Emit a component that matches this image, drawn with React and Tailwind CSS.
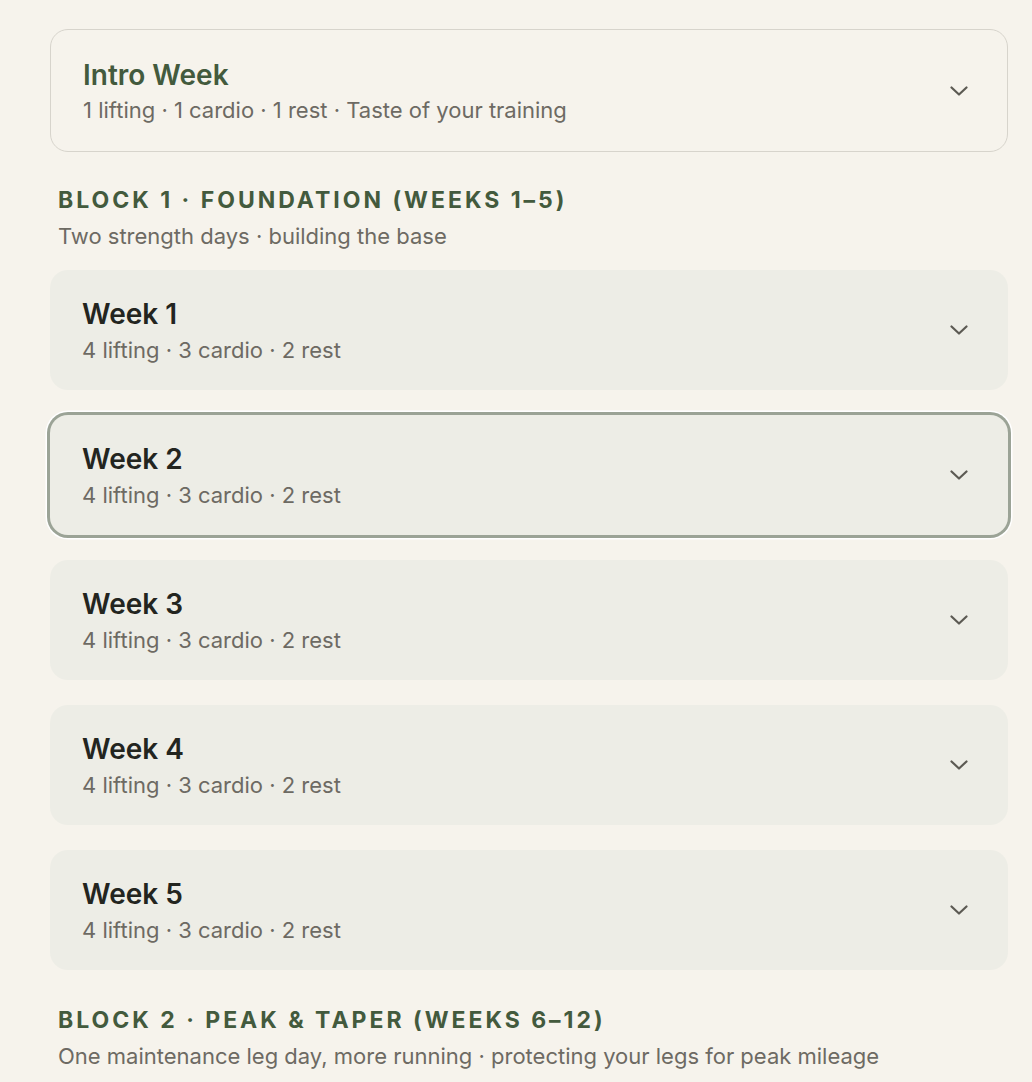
import React from "react";

const weeks = [1, 2, 3, 4, 5];

function Chevron() {
  return (
    <svg width="18" height="10" viewBox="0 0 18 10" fill="none" stroke="#5c5a53" strokeWidth="2.2" strokeLinecap="round" strokeLinejoin="round">
      <path d="M1.5 1.5 9 8.5 16.5 1.5" />
    </svg>
  );
}

function WeekCard({ n, active }) {
  return (
    <button
      className={`w-full flex items-center justify-between text-left bg-[#edede6] rounded-[18px] h-[120px] pl-[32px] pr-[40px] ${
        active ? "shadow-[0_0_0_3px_#9ba396,0_0_0_4.5px_#ffffff]" : ""
      }`}
    >
      <div>
        <div className="text-[28px] leading-[34px] font-semibold text-[#23251f]">Week {n}</div>
        <div className="text-[22px] leading-[28px] text-[#6d6a63] mt-[5px]">4 lifting · 3 cardio · 2 rest</div>
      </div>
      <Chevron />
    </button>
  );
}

export default function App() {
  return (
    <div className="min-h-screen bg-[#f6f3ec] pl-[50px] pr-[24px] pt-[29px]" style={{ fontFamily: "Inter, 'Noto Sans', sans-serif" }}>
      <button className="w-full flex items-center justify-between text-left border-[1.5px] border-[#d7d4cc] rounded-[18px] h-[123px] pl-[32px] pr-[39px]">
        <div>
          <div className="text-[28px] leading-[34px] font-semibold text-[#435a3d]">Intro Week</div>
          <div className="text-[22px] leading-[28px] text-[#6d6a63] mt-[4px]">1 lifting · 1 cardio · 1 rest · Taste of your training</div>
        </div>
        <Chevron />
      </button>

      <div className="px-[8px] pt-[34px] pb-[20px]">
        <div className="text-[23px] leading-[28px] font-bold tracking-[0.13em] text-[#435a3d]">BLOCK 1 · FOUNDATION (WEEKS 1–5)</div>
        <div className="text-[22px] leading-[28px] text-[#6d6a63] mt-[8px]">Two strength days · building the base</div>
      </div>

      <div className="flex flex-col gap-[25px]">
        {weeks.map((n) => (
          <WeekCard key={n} n={n} active={n === 2} />
        ))}
      </div>

      <div className="px-[8px] pt-[36px]">
        <div className="text-[23px] leading-[28px] font-bold tracking-[0.13em] text-[#435a3d]">BLOCK 2 · PEAK &amp; TAPER (WEEKS 6–12)</div>
        <div className="text-[22px] leading-[28px] text-[#6d6a63] mt-[8px]">One maintenance leg day, more running · protecting your legs for peak mileage</div>
      </div>
    </div>
  );
}
